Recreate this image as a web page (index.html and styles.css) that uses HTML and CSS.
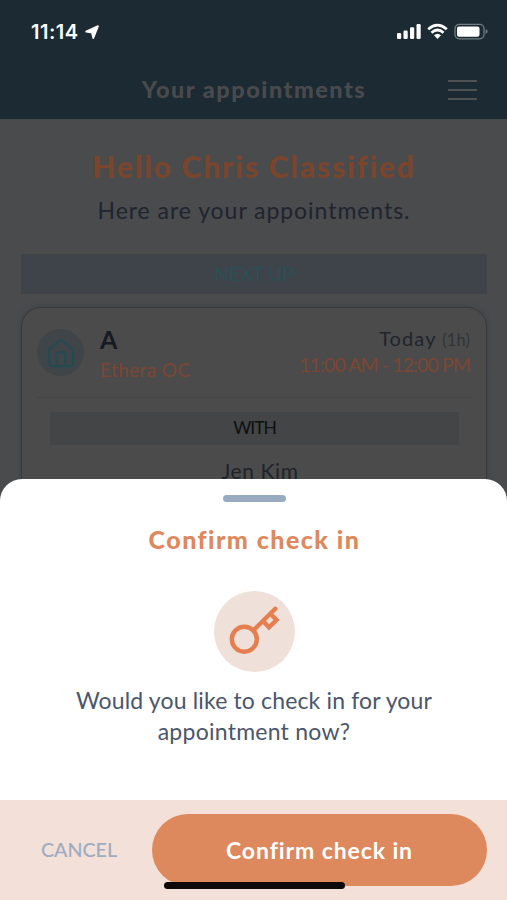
FILE: index.html
```html
<!DOCTYPE html>
<html lang="en">
<head>
<meta charset="utf-8">
<title>Your appointments</title>
<link rel="stylesheet" href="styles.css">
</head>
<body>
<div class="screen">
  <header class="header">
    <div class="status">
      <span class="clock">11:14</span>
      <svg class="location" width="14" height="15" viewBox="0 0 14 15"><path d="M13 1.1 8.3 13 7 7.700 1.200 6.6Z" fill="#fff" stroke="#fff" stroke-width="1.8" stroke-linejoin="round"/></svg>
      <svg class="indicators" width="91" height="18" viewBox="0 0 91 18">
        <g fill="#fff">
          <rect x="0" y="10" width="4.2" height="6" rx="1.2"/><rect x="6.5" y="7.5" width="4.2" height="8.5" rx="1.2"/><rect x="13" y="4.3" width="4.2" height="11.7" rx="1.2"/><rect x="19.5" y="1" width="4.2" height="15" rx="1.2"/>
        </g>
        <g fill="none" stroke="#fff" stroke-width="2.7"><path d="M31.2 6.2Q40.5-2 49.8 6.2"/><path d="M34.5 9.7Q40.5 4.3 46.5 9.7"/></g>
        <path d="M37 12.3Q40.5 9.3 44 12.3L40.5 16Z" fill="#fff"/>
        <rect x="58" y="1.4" width="29" height="14.4" rx="4.2" fill="none" stroke="#737c82" stroke-width="1.3"/>
        <rect x="60" y="3.5" width="22.5" height="10.3" rx="2" fill="#fff"/>
        <path d="M88.600 6.2q2 .5 2 2.4t-2 2.4Z" fill="#737c82"/>
      </svg>
    </div>
    <div class="titlebar">
      <h1 class="title">Your appointments</h1>
      <div class="menu"><i></i><i></i><i></i></div>
    </div>
  </header>
  <main class="content">
    <h2 class="hello">Hello Chris Classified</h2>
    <p class="intro">Here are your appointments.</p>
    <div class="next">NEXT UP</div>
    <section class="card">
      <div class="summary">
        <div class="home">
          <svg width="28" height="30" viewBox="0 0 30 32" fill="none" stroke="#244a52" stroke-width="2.3" stroke-linejoin="round" stroke-linecap="round"><path d="M2.2 12.3 15 2l12.8 10.3V27a3 3 0 0 1-3 3H5.200a3 3 0 0 1-3-3Z"/><path d="M10.300 30V15.500h9.400V30"/></svg>
        </div>
        <div class="place"><div class="name">A</div><div class="site">Ethera OC</div></div>
        <div class="when"><div class="day">Today <span class="length">(1h)</span></div><div class="hours">11:00 AM - 12:00 PM</div></div>
      </div>
      <div class="with">WITH</div>
      <div class="person">Jen Kim</div>
    </section>
  </main>
  <div class="sheet">
    <div class="handle"></div>
    <h2 class="question-title">Confirm check in</h2>
    <div class="key">
      <svg width="81" height="81" viewBox="0 0 81 81" fill="none" stroke="#e57f50" stroke-width="4.400"><circle cx="30.300" cy="48.200" r="12.500"/><path d="M39.500 39.300 61.300 17.800" stroke-linecap="round"/><path d="M49.500 30.500 55 36.300 62.500 29 57 23.200"/></svg>
    </div>
    <p class="question">Would you like to check in for your<br><span class="second">appointment now?</span></p>
    <footer class="actions">
      <button class="cancel">CANCEL</button>
      <button class="confirm">Confirm check in</button>
      <div class="home-indicator"></div>
    </footer>
  </div>
</div>
</body>
</html>
```
FILE: styles.css
```css
* { box-sizing: border-box; }
body { margin: 0; font-family: Lato, sans-serif; }
h1, h2, p { margin: 0; }
.screen { position: relative; height: 900px; overflow: hidden; background: #494b4d; }
.header { height: 119px; padding-top: 20px; background: #1c2b33; }
.status { display: flex; align-items: center; height: 24px; padding: 0 19px 0 31px; color: #fff; }
.clock { font: 600 20px/24px Inter, sans-serif; letter-spacing: .5px; }
.location { margin-left: 6px; }
.indicators { margin-left: auto; }
.titlebar { position: relative; height: 50px; margin-top: 20px; }
.title { padding-left: 1px; color: #4a4a4e; font-size: 23.500px; font-weight: 900; line-height: 50px; letter-spacing: 1.5px; text-align: center; }
.menu { position: absolute; right: 30px; top: 16px; display: flex; flex-direction: column; gap: 7px; width: 29px; }
.menu i { height: 2px; background: #505153; }
.content { padding: 30px 20px 0 21px; }
.hello { height: 36px; color: #7a452d; font-size: 30px; font-weight: 900; line-height: 35px; letter-spacing: 1.8px; text-align: center; }
.intro { height: 50px; color: #20242e; font-size: 23px; line-height: 51px; letter-spacing: .95px; text-align: center; }
.next { height: 40px; margin-top: 19px; background: #3f444b; color: #2b5054; font-size: 20px; line-height: 39px; letter-spacing: -.4px; text-align: center; }
.card { height: 240px; margin-top: 13px; padding: 1px 15px; border: 1.500px solid #36393d; border-radius: 20px; background: #4b4b4b; box-shadow: 0 0 5px #3d4046; }
.summary { display: flex; height: 89px; border-bottom: 1px solid #444546; }
.home { display: flex; align-items: center; justify-content: center; width: 47px; height: 47px; margin-top: 20px; border-radius: 50%; background: #3f4549; }
.place { margin: 16px 0 0 16px; }
.name { color: #171a20; font-size: 25px; font-weight: 700; line-height: 28px; }
.site { color: #7b4733; font-size: 19px; line-height: 33px; letter-spacing: .4px; }
.when { margin: 15px 1px 0 auto; text-align: right; white-space: nowrap; }
.day { height: 28px; color: #20242b; font-size: 20px; line-height: 28px; letter-spacing: 1.1px; }
.length { color: #323437; font-size: 16.500px; letter-spacing: .1px; }
.hours { color: #7b4733; font-size: 19.500px; line-height: 26px; letter-spacing: -.9px; }
.with { height: 33px; margin: 14px 12px 0 13px; background: #434547; color: #0e0f11; font-size: 17.500px; line-height: 31px; letter-spacing: -1.1px; text-align: center; }
.person { padding-left: 12px; color: #202329; font-size: 21px; line-height: 51px; letter-spacing: .6px; text-align: center; }
.sheet { position: absolute; inset: 479px 0 0; display: flex; flex-direction: column; align-items: center; border-radius: 22px 22px 0 0; background: #fff; }
.handle { width: 63px; height: 7px; margin: 16px 0 0 1px; border-radius: 4px; background: #98abc1; }
.question-title { margin: 19px 0 0 2px; color: #de885d; font-size: 25px; font-weight: 900; line-height: 36px; letter-spacing: 1.450px; }
.key { width: 81px; height: 81px; margin: 34px 0 0 2px; border-radius: 50%; background: #efe0da; }
.question { margin: 13px 0 0 1px; color: #4a566d; font-size: 23px; line-height: 30.500px; letter-spacing: .15px; text-align: center; }
.second { letter-spacing: .25px; }
.actions { position: relative; display: flex; align-items: flex-start; width: 100%; height: 100px; margin-top: auto; padding: 14px 20px 0 21px; background: #f2e0d9; }
button { padding: 0; border: 0; font-family: inherit; }
.cancel { width: 116px; height: 70px; background: none; color: #9eacbf; font-size: 19.700px; font-weight: 500; }
.confirm { width: 335px; height: 72px; margin-left: auto; padding-bottom: 1px; border-radius: 36px; background: #de885d; color: #fff; font-size: 23px; font-weight: 700; letter-spacing: .9px; }
.home-indicator { position: absolute; left: 164px; top: 82px; width: 181px; height: 7px; border-radius: 4px; background: #0d0908; }
```
